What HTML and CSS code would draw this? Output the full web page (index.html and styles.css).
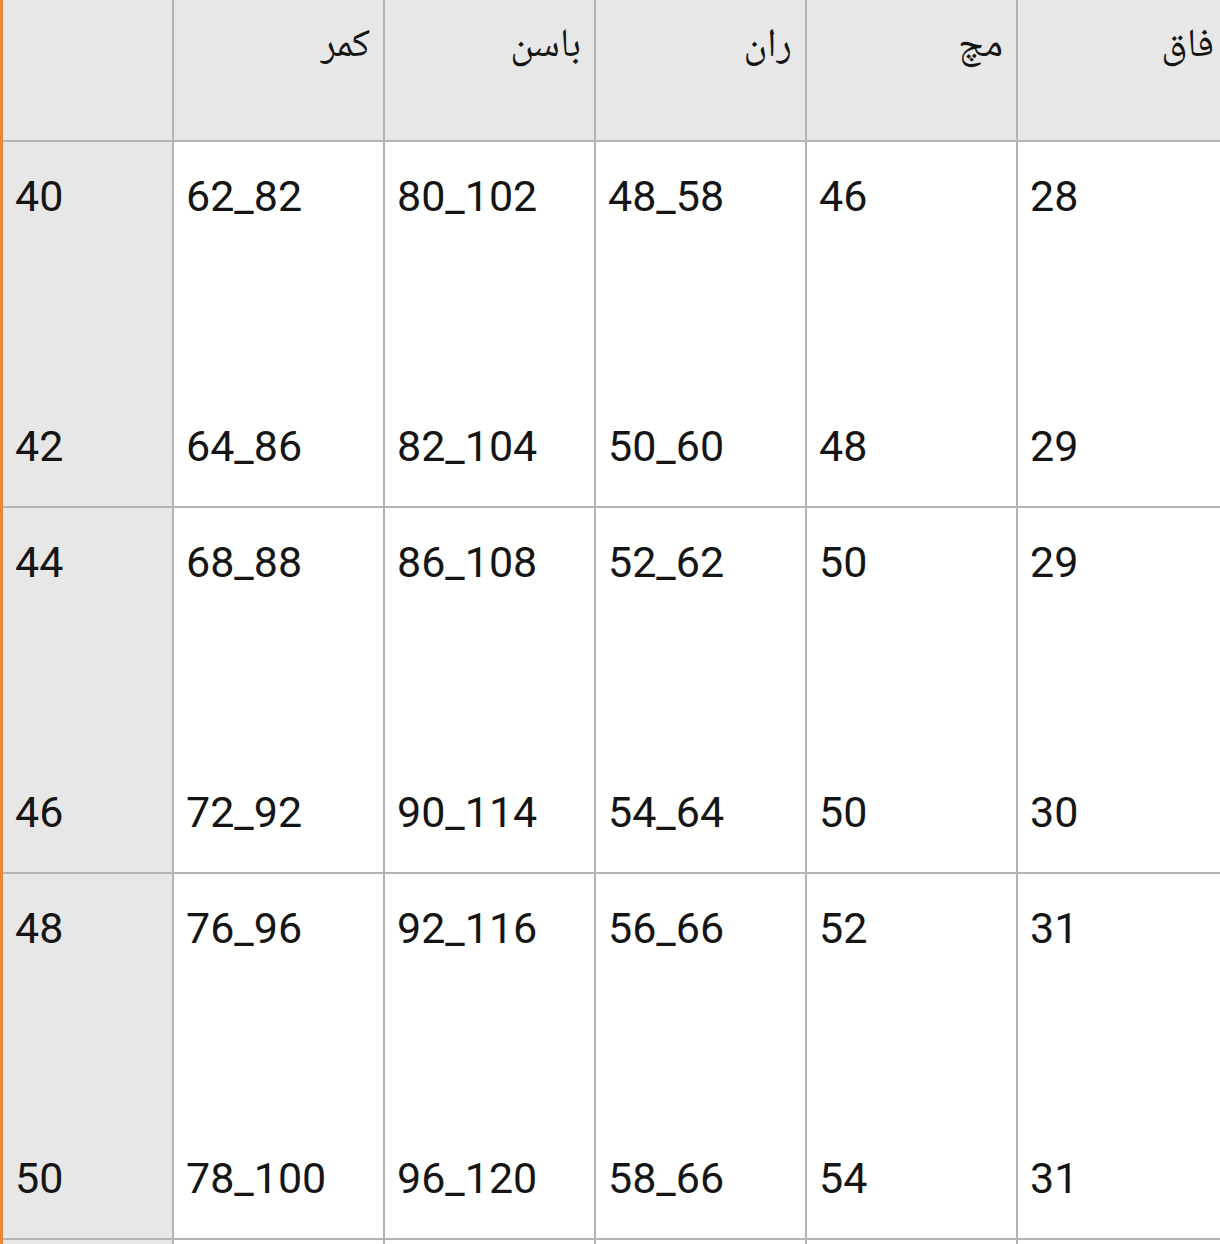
FILE: index.html
```html
<!DOCTYPE html>
<html lang="fa">
<head>
<meta charset="utf-8">
<title>جدول سایز</title>
<link rel="stylesheet" href="styles.css">
</head>
<body>
<div class="sheet">
  <div class="cell head side"></div>
  <div class="cell head"><span class="title">کمر</span></div>
  <div class="cell head"><span class="title">باسن</span></div>
  <div class="cell head"><span class="title">ران</span></div>
  <div class="cell head"><span class="title">مچ</span></div>
  <div class="cell head"><span class="title">فاق</span></div>

  <div class="cell side"><span class="v">40</span><span class="v low">42</span></div>
  <div class="cell"><span class="v">62_82</span><span class="v low">64_86</span></div>
  <div class="cell"><span class="v">80_102</span><span class="v low">82_104</span></div>
  <div class="cell"><span class="v">48_58</span><span class="v low">50_60</span></div>
  <div class="cell"><span class="v">46</span><span class="v low">48</span></div>
  <div class="cell"><span class="v">28</span><span class="v low">29</span></div>

  <div class="cell side"><span class="v">44</span><span class="v low">46</span></div>
  <div class="cell"><span class="v">68_88</span><span class="v low">72_92</span></div>
  <div class="cell"><span class="v">86_108</span><span class="v low">90_114</span></div>
  <div class="cell"><span class="v">52_62</span><span class="v low">54_64</span></div>
  <div class="cell"><span class="v">50</span><span class="v low">50</span></div>
  <div class="cell"><span class="v">29</span><span class="v low">30</span></div>

  <div class="cell side"><span class="v">48</span><span class="v low">50</span></div>
  <div class="cell"><span class="v">76_96</span><span class="v low">78_100</span></div>
  <div class="cell"><span class="v">92_116</span><span class="v low">96_120</span></div>
  <div class="cell"><span class="v">56_66</span><span class="v low">58_66</span></div>
  <div class="cell"><span class="v">52</span><span class="v low">54</span></div>
  <div class="cell"><span class="v">31</span><span class="v low">31</span></div>

  <div class="cell side"></div>
  <div class="cell"></div>
  <div class="cell"></div>
  <div class="cell"></div>
  <div class="cell"></div>
  <div class="cell"></div>
</div>
</body>
</html>
```

FILE: styles.css
```css
html, body {
  margin: 0;
  padding: 0;
  background: #ffffff;
  overflow: hidden;
}

body {
  width: 1220px;
  height: 1244px;
}

.sheet {
  display: grid;
  grid-template-columns: 169px 209px 209px 209px 209px 209px;
  grid-template-rows: 140px 364px 364px 364px 60px;
  column-gap: 2px;
  row-gap: 2px;
  width: max-content;
  background: #b4b4b4;
  border-left: 3px solid #e8873a;
  font-family: Roboto, "Liberation Sans", sans-serif;
  color: #151515;
}

.cell {
  background: #ffffff;
  display: flex;
  flex-direction: column;
  align-items: flex-start;
  padding: 29px 12px 0 12px;
  box-sizing: border-box;
}

.side {
  background: #e7e7e7;
}

.head {
  background: #e7e7e7;
  align-items: flex-end;
  padding: 21px 13px 0 12px;
}

.title {
  direction: rtl;
  font-family: "Noto Naskh Arabic", "Noto Sans Arabic", "DejaVu Sans", sans-serif;
  font-size: 40px;
  line-height: 52px;
}

.v {
  font-size: 43px;
  line-height: 51px;
}

.low {
  margin-top: 199px;
}
```
